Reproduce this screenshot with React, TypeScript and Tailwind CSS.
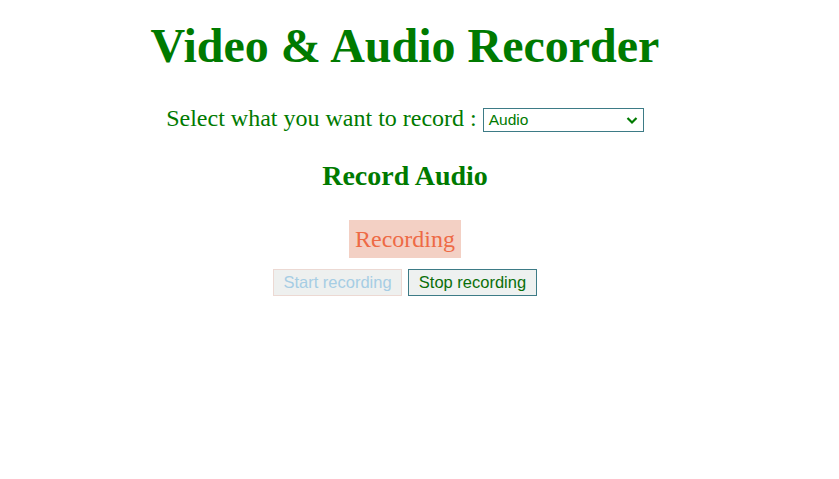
export default function App() {
  return (
    <div className="w-[810px] text-center text-[#007a00] font-['Liberation_Serif',serif]">
      <h1 className="pt-[18px] text-[48px] font-bold leading-[56px]">Video &amp; Audio Recorder</h1>

      <div className="mt-[30px] flex items-center justify-center gap-[6px] text-[24px] leading-[28px]">
        <span>Select what you want to record :</span>
        <div className="relative mt-[3px] h-[24px] w-[161px] border border-[#3d7b86] bg-white text-left font-['Liberation_Sans',sans-serif] text-[15.5px] leading-[22px]">
          <span className="pl-[5px]">Audio</span>
          <svg
            className="absolute right-[5px] top-[7px]"
            width="12"
            height="9"
            viewBox="0 0 12 9"
            fill="none"
            stroke="#007a00"
            strokeWidth="2.2"
          >
            <path d="M1.5 2 L6 6.5 L10.5 2" />
          </svg>
        </div>
      </div>

      <h2 className="mt-[28px] text-[28px] font-bold leading-[32px]">Record Audio</h2>

      <div className="mt-[28px] flex justify-center">
        <span className="h-[38px] w-[112px] bg-[#f3d0c4] text-[24px] leading-[38px] text-[#ee6a45]">Recording</span>
      </div>

      <div className="mt-[11px] flex justify-center gap-[6px] font-['Liberation_Sans',sans-serif] text-[16.5px]">
        <button
          disabled
          className="h-[27px] w-[129px] border border-[#ecd9d3] bg-[#eef0ef] text-[#a6cde4]"
        >
          Start recording
        </button>
        <button className="h-[27px] w-[129px] border border-[#3d7b86] bg-[#eef1f0] text-[#0a6f0a]">
          Stop recording
        </button>
      </div>
    </div>
  );
}
